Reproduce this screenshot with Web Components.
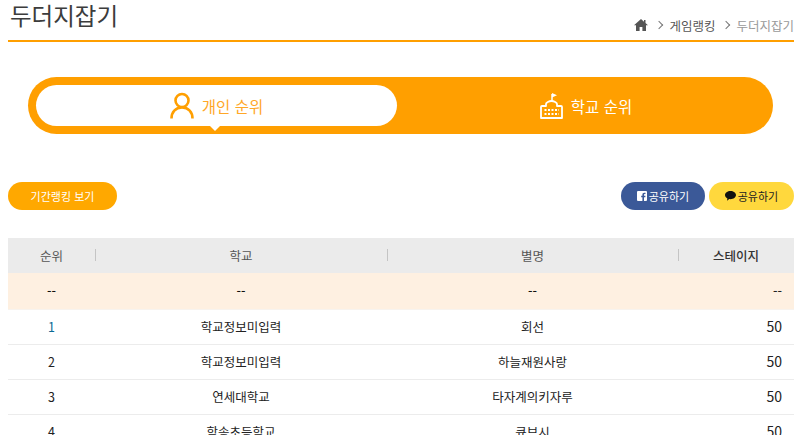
<!DOCTYPE html>
<html lang="ko">
<head>
<meta charset="utf-8">
<title>두더지잡기</title>
<style>
  html, body { margin: 0; overflow: hidden; height: 435px; background: #fff; }
  body {
    padding: 0 6px 0 8px;
    font-family: "Noto Sans CJK KR", "Noto Sans", sans-serif;
    color: #333;
  }
</style>
</head>
<body>
<page-head heading="두더지잡기" trail="게임랭킹"></page-head>
<rank-tabs></rank-tabs>
<action-bar></action-bar>
<rank-table></rank-table>

<script>
class PageHead extends HTMLElement {
  constructor() {
    super();
    this.attachShadow({ mode: 'open' });
    const heading = this.getAttribute('heading');
    this.shadowRoot.innerHTML = `
      <style>
        :host {
          display: flex;
          justify-content: space-between;
          align-items: flex-end;
          height: 40px;
          border-bottom: 2px solid #ff9f00;
        }
        h1 {
          margin: 0 0 0 2px;
          align-self: flex-start;
          font-size: 23.5px;
          line-height: 30px;
          font-weight: 400;
          color: #3c3c3c;
        }
        nav {
          display: flex;
          align-items: center;
          height: 30px;
          font-size: 12.5px;
          color: #555;
        }
        .sep { width: 5px; height: 5px; margin: 0 7px 0 8px; border: solid #777; border-width: 1px 1px 0 0; transform: rotate(45deg); }
        .here { color: #999; }
        svg { display: block; }
      </style>
      <h1>${heading}</h1>
      <nav>
        <svg width="14" height="12" viewBox="0 0 14 12"><path fill="#555" d="M7 0 0 6.2h2V12h3.6V8h2.8v4H12V6.2h2L11.5 4V1H10v1.700z"/></svg>
        <span class="sep"></span>
        <span>${this.getAttribute('trail')}</span>
        <span class="sep"></span>
        <span class="here">${heading}</span>
      </nav>
    `;
  }
}

class RankTabs extends HTMLElement {
  constructor() {
    super();
    this.attachShadow({ mode: 'open' });
    this.shadowRoot.innerHTML = `
      <style>
        :host {
          display: grid;
          grid-template-columns: 361px 1fr;
          height: 41px;
          margin: 35px 21px 0 20px;
          padding: 8px;
          border-radius: 29px;
          background: #ff9f00;
          font-size: 15.5px;
        }
        .tab { display: flex; align-items: center; justify-content: center; gap: 8px; position: relative; color: #fff; }
        .tab + .tab { padding-left: 10px; }
        .on { background: #fff; color: #ffa726; border-radius: 21px; }
        .on::after {
          content: '';
          position: absolute;
          left: 174px;
          top: 100%;
          border: 5px solid transparent;
          border-top-color: #fff;
        }
        svg { display: block; }
      </style>
      <div class="tab on">
        <svg width="24" height="27" viewBox="0 0 24 27" fill="none" stroke="#ff9f00" stroke-width="2.600">
          <circle cx="12" cy="8.500" r="6.500"/>
          <path d="M1.500 26.500c0-6.500 4-11 10.500-11s10.500 4.500 10.500 11"/>
        </svg>
        <span>개인 순위</span>
      </div>
      <div class="tab">
        <svg width="23" height="26" viewBox="0 0 23 26">
          <path fill="none" stroke="#fff" stroke-width="1.800" stroke-linejoin="round" d="M1 25V14a1 1 0 0 1 1-1h4v-2c0-1.500 3-3 5.500-3s5.500 1.500 5.500 3v2h4a1 1 0 0 1 1 1v11z"/>
          <path fill="none" stroke="#fff" stroke-width="1.500" d="M12 8V1"/>
          <path fill="#fff" d="M12 0 17 2.200 12 4.500z"/>
          <path stroke="#fff" stroke-width="1.800" stroke-dasharray="2 1.500" d="M4.500 17h14.500M4.500 21h14.500"/>
        </svg>
        <span>학교 순위</span>
      </div>
    `;
  }
}

class PillButton extends HTMLElement {
  constructor() {
    super();
    this.attachShadow({ mode: 'open' });
    this.shadowRoot.innerHTML = `
      <style>
        :host {
          display: inline-flex;
          align-items: center;
          justify-content: center;
          gap: 2px;
          height: 28px;
          border-radius: 14px;
          font-size: 11px;
          background: var(--bg, #ffa800);
          color: var(--fg, #fff);
        }
        ::slotted(svg) { display: block; }
      </style>
      <slot></slot>
    `;
  }
}

class ActionBar extends HTMLElement {
  constructor() {
    super();
    this.attachShadow({ mode: 'open' });
    this.shadowRoot.innerHTML = `
      <style>
        :host { display: flex; justify-content: space-between; margin-top: 48px; }
        .share { display: flex; gap: 4px; }
        .period { width: 109px; }
        .fb { width: 84px; --bg: #3b5998; }
        .kakao { width: 85px; --bg: #ffd83d; --fg: #222; }
      </style>
      <pill-button class="period">기간랭킹 보기</pill-button>
      <div class="share">
        <pill-button class="fb">
          <svg width="10" height="10" viewBox="0 0 10 10"><path fill="#fff" fill-rule="evenodd" d="M1 0h8a1 1 0 0 1 1 1v8a1 1 0 0 1-1 1H7V6.200h1.300l.2-1.500H7V3.800c0-.5.200-.7.700-.7h.8V1.800H7.300C6 1.800 5.400 2.500 5.400 3.700v1H4.200v1.500h1.200V10H1a1 1 0 0 1-1-1V1a1 1 0 0 1 1-1z"/></svg>
          공유하기
        </pill-button>
        <pill-button class="kakao">
          <svg width="11" height="10" viewBox="0 0 11 10"><path fill="#111" d="M5.500 0C8.500 0 11 1.800 11 4.100S8.500 8.200 5.500 8.200c-.4 0-.8 0-1.200-.1L2 9.800l.4-2.400C.9 6.700 0 5.500 0 4.100 0 1.800 2.500 0 5.500 0z"/></svg>
          공유하기
        </pill-button>
      </div>
    `;
  }
}

class RankTable extends HTMLElement {
  constructor() {
    super();
    this.attachShadow({ mode: 'open' });
    this.rows = [
      ['1', '학교정보미입력', '회선', '50'],
      ['2', '학교정보미입력', '하늘재원사랑', '50'],
      ['3', '연세대학교', '타자계의키자루', '50'],
      ['4', '학송초등학교', '큐브시', '50']
    ];
    this.shadowRoot.innerHTML = `
      <style>
        :host { display: block; margin-top: 28px; font-size: 12.5px; }
        .row {
          display: grid;
          grid-template-columns: 87px 292px 291px 116px;
          align-items: center;
          height: 34px;
          border-bottom: 1px solid #ececec;
          color: #222;
          text-align: center;
        }
        .row > span { padding-bottom: 2px; }
        .row > :last-child { text-align: right; padding-right: 12px; font-size: 14px; color: #222; }
        .head { height: 35px; background: #ebebeb; border: 0; color: #555; }
        .head > span { position: relative; padding-bottom: 0; }
        .head > span + span::before {
          content: '';
          position: absolute;
          left: 0;
          top: 3px;
          height: 12px;
          border-left: 1px solid #c4c4c4;
        }
        .head > :last-child { text-align: center; padding: 0; font-size: 12.5px; font-weight: 500; color: #333; }
        .mine { height: 36px; background: #fef0e1; border-bottom-color: #f7f3ee; color: #111; font-weight: 500; }
        .mine > :last-child { font-size: 12.5px; }
        .first { color: #0b6a94; }
      </style>
      <div class="row head"><span>순위</span><span>학교</span><span>별명</span><span>스테이지</span></div>
      <div class="row mine"><span>--</span><span>--</span><span>--</span><span>--</span></div>
      ${this.rows.map((r, i) => `
        <div class="row"><span class="${i === 0 ? 'first' : ''}">${r[0]}</span><span>${r[1]}</span><span>${r[2]}</span><span>${r[3]}</span></div>
      `).join('')}
    `;
  }
}

customElements.define('page-head', PageHead);
customElements.define('rank-tabs', RankTabs);
customElements.define('pill-button', PillButton);
customElements.define('action-bar', ActionBar);
customElements.define('rank-table', RankTable);
</script>
</body>
</html>
